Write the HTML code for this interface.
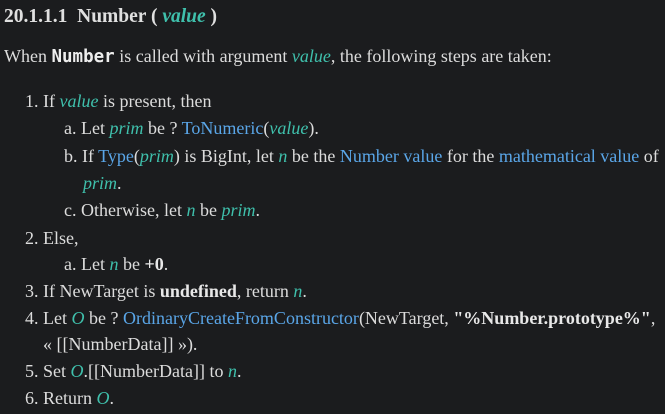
<!DOCTYPE html>
<html><head><meta charset="utf-8"><style>
html,body{margin:0;padding:0;background:#1b1c1e;width:665px;height:414px;overflow:hidden}
body{font-family:"Liberation Serif",serif;font-size:18px;color:#dcdcdc}
.l{position:absolute;white-space:nowrap;line-height:20px}
i.v{color:#3fc0ac;font-style:italic}
a{color:#5aa6e8;text-decoration:none}
b{font-weight:bold;color:#e8e8e8}
h1{position:absolute;left:4px;top:6px;margin:0;font-size:19.5px;font-weight:bold;color:#e0e0e0;white-space:nowrap;line-height:22px}
code{font-family:"DejaVu Sans Mono","Liberation Mono",monospace;font-weight:bold;font-size:17.5px;color:#eee}
</style></head><body>
<h1>20.1.1.1&nbsp; Number ( <i class="v">value</i> )</h1>
<div class="l" style="left:4px;top:46px">When <code>Number</code> is called with argument <i class="v">value</i>, the following steps are taken:</div>
<div class="l" style="left:25px;top:91px">1. If <i class="v">value</i> is present, then</div>
<div class="l" style="left:64px;top:118px">a. Let <i class="v">prim</i> be ? <a>ToNumeric</a>(<i class="v">value</i>).</div>
<div class="l" style="left:64px;top:146px">b. If <a>Type</a>(<i class="v">prim</i>) is BigInt, let <i class="v">n</i> be the <a>Number value</a> for the <a>mathematical value</a> of</div>
<div class="l" style="left:83px;top:173px"><i class="v">prim</i>.</div>
<div class="l" style="left:64px;top:200px">c. Otherwise, let <i class="v">n</i> be <i class="v">prim</i>.</div>
<div class="l" style="left:25px;top:228px">2. Else,</div>
<div class="l" style="left:64px;top:254px">a. Let <i class="v">n</i> be <b>+0</b>.</div>
<div class="l" style="left:25px;top:281px">3. If NewTarget is <b>undefined</b>, return <i class="v">n</i>.</div>
<div class="l" style="left:25px;top:308px">4. Let <i class="v">O</i> be ? <a>OrdinaryCreateFromConstructor</a>(NewTarget, <b>"%Number.prototype%"</b>,</div>
<div class="l" style="left:43px;top:334px">« [[NumberData]] »).</div>
<div class="l" style="left:25px;top:361px">5. Set <i class="v">O</i>.[[NumberData]] to <i class="v">n</i>.</div>
<div class="l" style="left:25px;top:388px">6. Return <i class="v">O</i>.</div>
</body></html>
